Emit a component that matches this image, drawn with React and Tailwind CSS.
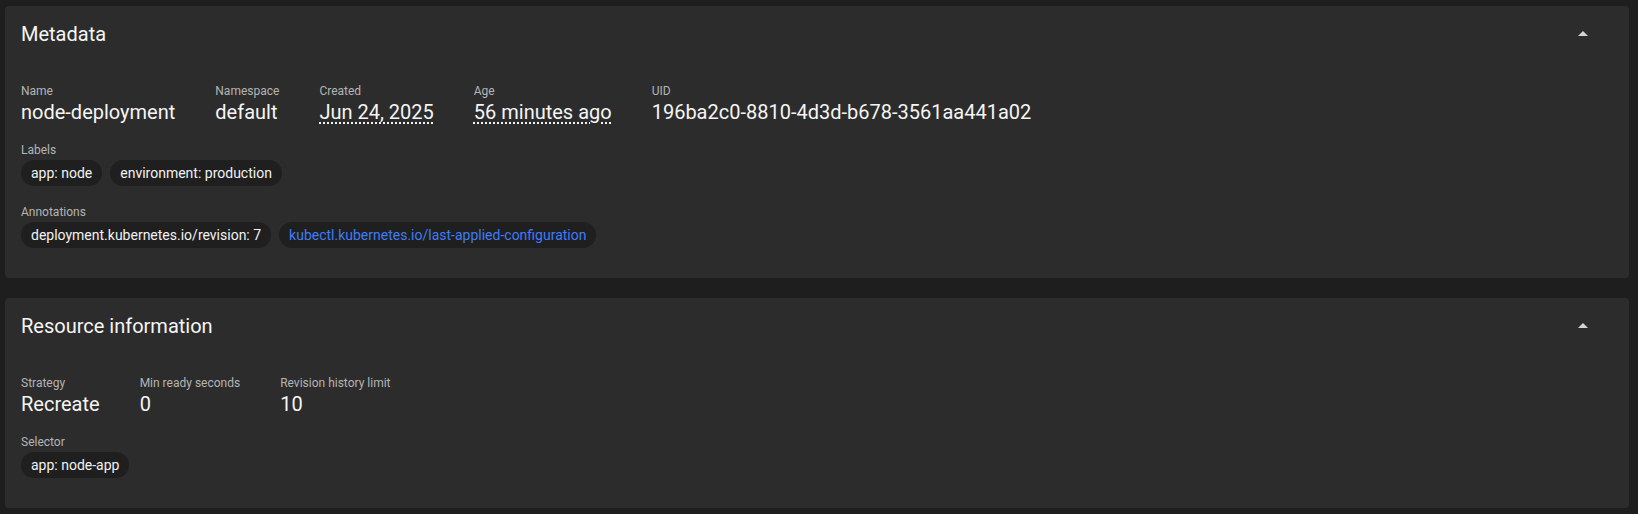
import { useState } from 'react';

const metaFields = [
    { label: 'Name', value: 'node-deployment' },
    { label: 'Namespace', value: 'default' },
    { label: 'Created', value: 'Jun 24, 2025', dotted: true },
    { label: 'Age', value: '56 minutes ago', dotted: true },
    { label: 'UID', value: '196ba2c0-8810-4d3d-b678-3561aa441a02' },
];

const resourceFields = [
    { label: 'Strategy', value: 'Recreate' },
    { label: 'Min ready seconds', value: '0' },
    { label: 'Revision history limit', value: '10' },
];

const ArrowUp = () => (
    <svg width="24" height="24" viewBox="0 0 24 24" fill="#d4d4d4">
        <path d="M7 14l5-5 5 5z" />
    </svg>
);

const Chip = ({ children, link }) => (
    <span className={`inline-flex items-center h-[26px] px-[10px] rounded-full bg-[#1f1f1f] text-[14px] leading-5 ${link ? 'text-[#3f7cf7]' : 'text-[#f2f2f2]'}`}>
        {children}
    </span>
);

const FieldRow = ({ fields }) => (
    <div className="flex gap-[40px]">
        {fields.map(f => (
            <div key={f.label} className="flex flex-col">
                <span className="text-[12px] leading-[14px] text-[#b4b4b4]">{f.label}</span>
                <span className={`text-[20px] leading-[28px] text-[#f5f5f5] ${f.dotted ? 'underline decoration-dotted underline-offset-[3px] decoration-[1.5px]' : ''}`}>
                    {f.value}
                </span>
            </div>
        ))}
    </div>
);

const ChipGroup = ({ label, children }) => (
    <div className="flex flex-col">
        <span className="text-[12px] leading-[14px] text-[#b4b4b4] mb-[3px]">{label}</span>
        <div className="flex flex-wrap gap-[8px]">{children}</div>
    </div>
);

const Section = ({ title, children }) => {
    const [open, setOpen] = useState(true);
    return (
        <div className="bg-[#2c2c2c] rounded-[4px] px-[16px] pt-[16px] pb-[30px]">
            <div className="flex items-center justify-between h-[24px]">
                <h2 className="text-[20px] leading-6 text-[#f5f5f5]">{title}</h2>
                <button onClick={() => setOpen(!open)} className="mr-[18px]">
                    <ArrowUp />
                </button>
            </div>
            {open && <div className="mt-[38px]">{children}</div>}
        </div>
    );
};

export default function App() {
    return (
        <div className="min-h-screen bg-[#1e1e1e] pl-[5px] pr-[9px] pt-[6px] pb-[6px]" style={{ fontFamily: 'Roboto, "Noto Sans", sans-serif' }}>
            <div className="flex flex-col gap-[20px]">
                {/* Metadata */}
                <Section title="Metadata">
                    <FieldRow fields={metaFields} />
                    <div className="mt-[17px]">
                        <ChipGroup label="Labels">
                            <Chip>app: node</Chip>
                            <Chip>environment: production</Chip>
                        </ChipGroup>
                    </div>
                    <div className="mt-[19px]">
                        <ChipGroup label="Annotations">
                            <Chip>deployment.kubernetes.io/revision: 7</Chip>
                            <Chip link>kubectl.kubernetes.io/last-applied-configuration</Chip>
                        </ChipGroup>
                    </div>
                </Section>

                {/* Resource information */}
                <Section title="Resource information">
                    <FieldRow fields={resourceFields} />
                    <div className="mt-[17px]">
                        <ChipGroup label="Selector">
                            <Chip>app: node-app</Chip>
                        </ChipGroup>
                    </div>
                </Section>
            </div>
        </div>
    );
}
